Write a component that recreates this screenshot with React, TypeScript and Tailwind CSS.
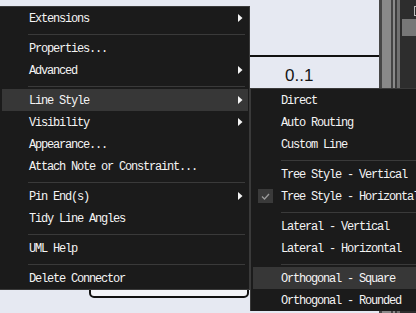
import React from 'react';

type Item = { label?: string; sub?: boolean; sep?: boolean; active?: boolean; checked?: boolean };

const mainItems: Item[] = [
  { label: 'Extensions', sub: true },
  { sep: true },
  { label: 'Properties...' },
  { label: 'Advanced', sub: true },
  { sep: true },
  { label: 'Line Style', sub: true, active: true },
  { label: 'Visibility', sub: true },
  { label: 'Appearance...' },
  { label: 'Attach Note or Constraint...' },
  { sep: true },
  { label: 'Pin End(s)', sub: true },
  { label: 'Tidy Line Angles' },
  { sep: true },
  { label: 'UML Help' },
  { sep: true },
  { label: 'Delete Connector' },
];

const lineItems: Item[] = [
  { label: 'Direct' },
  { label: 'Auto Routing' },
  { label: 'Custom Line' },
  { sep: true },
  { label: 'Tree Style - Vertical' },
  { label: 'Tree Style - Horizontal', checked: true },
  { sep: true },
  { label: 'Lateral - Vertical' },
  { label: 'Lateral - Horizontal' },
  { sep: true },
  { label: 'Orthogonal - Square', active: true },
  { label: 'Orthogonal - Rounded' },
];

const font = { fontFamily: '"Liberation Mono", "DejaVu Sans Mono", monospace' };

const Arrow = () => (
  <svg width="5" height="8" viewBox="0 0 5 8" className="absolute right-[5px] top-[7px]">
    <polygon points="0,0 4.5,4 0,8" fill="#f4f4f4" />
  </svg>
);

const Check = () => (
  <div className="absolute left-[5px] top-[4px] w-[15px] h-[14px] bg-[#3a3a3a] flex items-center justify-center">
    <svg width="9" height="7" viewBox="0 0 9 7">
      <polyline points="1,3.5 3.5,6 8,1" fill="none" stroke="#9a9a9a" strokeWidth="1.3" />
    </svg>
  </div>
);

const Row: React.FC<{ item: Item; indent: string; sepIndent: string }> = ({ item, indent, sepIndent }) => {
  if (item.sep) {
    return (
      <div className={`h-[8px] pt-[5px] ${sepIndent} pr-[4px]`}>
        <div className="h-px bg-[#3a3a3a]" />
      </div>
    );
  }
  return (
    <div
      className={`relative h-[22px] ml-[2px] mr-[1px] pt-[1px] flex items-center ${indent} ${
        item.active ? 'bg-[#373737]' : ''
      }`}
    >
      {item.checked && <Check />}
      <span className="text-[12px] tracking-[-1.2px] text-[#f4f4f4] whitespace-nowrap leading-none">{item.label}</span>
      {item.sub && <Arrow />}
    </div>
  );
};

const App: React.FC = () => {
  return (
    <div className="relative w-[416px] h-[313px] overflow-hidden bg-[#e6e9f2] flex" style={font}>
      {/* diagram canvas */}
      <div className="relative flex-1 flex flex-col">
        <div className="h-[55px]" />
        <div className="h-[2px] bg-[#111111]" />
        <div className="pl-[285px] pt-[10px] text-[17px] leading-[17px] text-[#151515]" style={{ fontFamily: '"Liberation Sans", Arial, sans-serif' }}>
          0..1
        </div>
        <div className="absolute left-[89px] top-[240px] w-[160px] h-[58px] border-[2px] border-[#111111] rounded-b-[5px] bg-[#f3f4f8]" />
      </div>

      {/* right dock strip */}
      <div className="w-[37px] flex">
        <div className="w-[3px] bg-[#464646]" />
        <div className="w-[9px] bg-[#898989]" />
        <div className="w-[2px] bg-[#444444]" />
        <div className="w-[2px] bg-[#8a8a8a]" />
        <div className="w-[2px] bg-[#3c3c3c]" />
        <div className="w-[3px] bg-[#707070]" />
        <div className="flex-1 bg-[#2d2d2d] flex flex-col items-end pt-[6px]">
          <div className="w-[2px] h-[10px] border-l border-t border-b border-[#bdbdbd]" />
          <div className="mt-[3px] w-[14px] h-[17px] bg-[#777777]" />
        </div>
      </div>

      {/* context menu */}
      <div className="absolute left-[-1px] top-[6px] w-[251px] bg-[#1b1b1b] border border-[#3a3a3a]">
        {mainItems.map((it, i) => (
          <Row key={i} item={it} indent="pl-[27px]" sepIndent="pl-[28px]" />
        ))}
      </div>

      {/* Line Style submenu */}
      <div className="absolute left-[250px] top-[88px] w-[200px] bg-[#1b1b1b] border-l border-t border-[#3a3a3a]">
        {lineItems.map((it, i) => (
          <Row key={i} item={it} indent="pl-[28px]" sepIndent="pl-[30px]" />
        ))}
      </div>
    </div>
  );
};

export default App;
